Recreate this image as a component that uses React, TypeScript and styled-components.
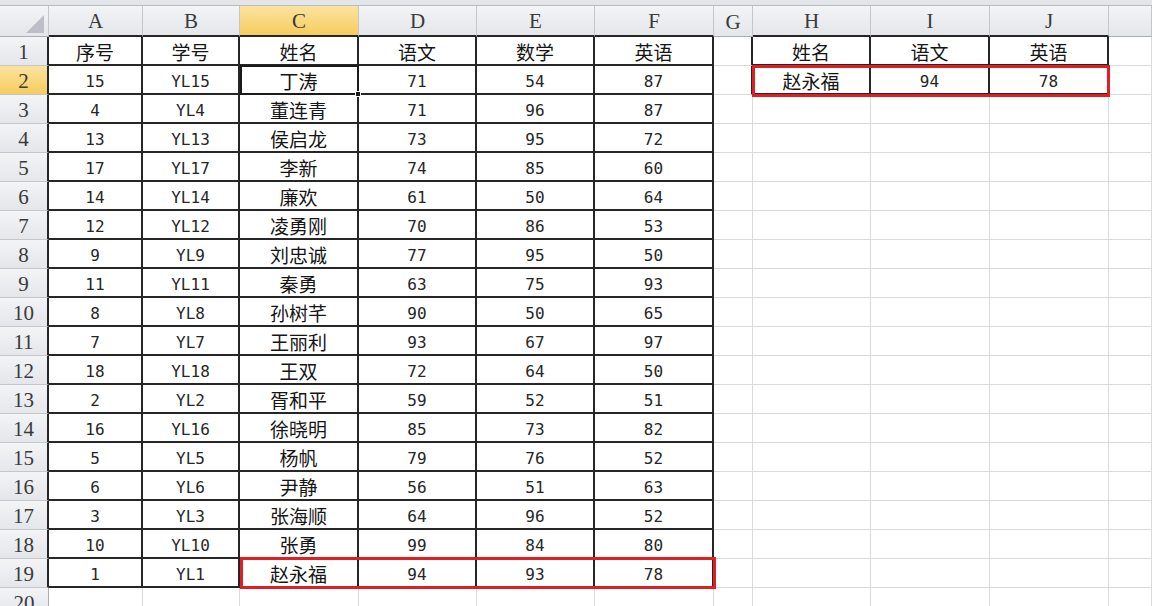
import React from "react";
import styled, { createGlobalStyle, css } from "styled-components";

const GlobalStyle = createGlobalStyle`
  html, body { margin: 0; padding: 0; background: #ffffff; }
  body { overflow: hidden; }
  * { box-sizing: border-box; }
`;

type Col = { key: string; w: string };
const COLS: Col[] = [
  { key: "A", w: "94px" },
  { key: "B", w: "97px" },
  { key: "C", w: "119px" },
  { key: "D", w: "118px" },
  { key: "E", w: "118px" },
  { key: "F", w: "119px" },
  { key: "G", w: "39px" },
  { key: "H", w: "118px" },
  { key: "I", w: "119px" },
  { key: "J", w: "119px" },
  { key: "K", w: "1fr" },
];

const MAIN: string[][] = [
  ["序号", "学号", "姓名", "语文", "数学", "英语"],
  ["15", "YL15", "丁涛", "71", "54", "87"],
  ["4", "YL4", "董连青", "71", "96", "87"],
  ["13", "YL13", "侯启龙", "73", "95", "72"],
  ["17", "YL17", "李新", "74", "85", "60"],
  ["14", "YL14", "廉欢", "61", "50", "64"],
  ["12", "YL12", "凌勇刚", "70", "86", "53"],
  ["9", "YL9", "刘忠诚", "77", "95", "50"],
  ["11", "YL11", "秦勇", "63", "75", "93"],
  ["8", "YL8", "孙树芊", "90", "50", "65"],
  ["7", "YL7", "王丽利", "93", "67", "97"],
  ["18", "YL18", "王双", "72", "64", "50"],
  ["2", "YL2", "胥和平", "59", "52", "51"],
  ["16", "YL16", "徐晓明", "85", "73", "82"],
  ["5", "YL5", "杨帆", "79", "76", "52"],
  ["6", "YL6", "尹静", "56", "51", "63"],
  ["3", "YL3", "张海顺", "64", "96", "52"],
  ["10", "YL10", "张勇", "99", "84", "80"],
  ["1", "YL1", "赵永福", "94", "93", "78"],
];

const LOOKUP: string[][] = [
  ["姓名", "语文", "英语"],
  ["赵永福", "94", "78"],
];

const ROW_COUNT = 20;

const inTable = (r: number, c: number) =>
  (r >= 1 && r <= 19 && c >= 0 && c <= 5) || (r >= 1 && r <= 2 && c >= 7 && c <= 9);

const valueAt = (r: number, c: number): string => {
  if (r >= 1 && r <= 19 && c >= 0 && c <= 5) return MAIN[r - 1][c];
  if (r >= 1 && r <= 2 && c >= 7 && c <= 9) return LOOKUP[r - 1][c - 7];
  return "";
};

const isCjk = (s: string) => /[\u4e00-\u9fff]/.test(s);

const DARK = "#262626";
const GRID = "#d9dadc";
const HEAD_LINE = "#c3c6cb";

const Page = styled.div`
  width: 1152px;
  height: 606px;
  overflow: hidden;
  display: flex;
  flex-direction: column;
  background: #fff;
`;

const TopStrip = styled.div`
  height: 6px;
  flex: none;
  background: #e3e5e9;
  border-bottom: 1px solid #b9bdc3;
`;

const Sheet = styled.div`
  display: grid;
  grid-template-columns: 49px ${COLS.map((c) => c.w).join(" ")};
  grid-template-rows: 31px repeat(${ROW_COUNT}, 29px);
`;

type Pos = { $r: number; $c: number };
const placed = css<Pos>`
  grid-row: ${(p) => p.$r};
  grid-column: ${(p) => p.$c};
`;

const headerBg = css<{ $active?: boolean }>`
  background: ${(p) =>
    p.$active
      ? "linear-gradient(#fbe3a0, #f6cc5e)"
      : "linear-gradient(#f3f4f6, #e4e6ea)"};
`;

const Corner = styled.div`
  grid-row: 1;
  grid-column: 1;
  background: linear-gradient(#f3f4f6, #e4e6ea);
  border-right: 1px solid ${HEAD_LINE};
  border-bottom: 1px solid #a9aeb5;
  display: flex;
  align-items: flex-end;
  justify-content: flex-end;
  padding: 0 4px 3px 0;
`;

const CornerMark = styled.span`
  width: 0;
  height: 0;
  border-left: 18px solid transparent;
  border-bottom: 18px solid #bcc0c6;
`;

const ColHeader = styled.div<Pos & { $active?: boolean; $dark?: boolean }>`
  ${placed};
  ${headerBg};
  border-right: 1px solid ${HEAD_LINE};
  border-bottom: ${(p) => (p.$dark ? `2px solid ${DARK}` : "1px solid #a9aeb5")};
  display: flex;
  align-items: center;
  justify-content: center;
  padding-top: 2px;
  font-family: "Liberation Serif", "Times New Roman", serif;
  font-size: 21px;
  color: #3a3a3a;
`;

const RowHeader = styled.div<Pos & { $active?: boolean; $dark?: boolean }>`
  ${placed};
  ${headerBg};
  border-right: ${(p) => (p.$dark ? `2px solid ${DARK}` : "1px solid #a9aeb5")};
  border-bottom: 1px solid ${HEAD_LINE};
  display: flex;
  align-items: center;
  justify-content: center;
  padding-top: 3px;
  font-family: "Liberation Serif", "Times New Roman", serif;
  font-size: 21px;
  color: #3a3a3a;
  overflow: hidden;
`;

const Cell = styled.div<Pos & { $darkRight?: boolean; $darkBottom?: boolean; $cjk?: boolean }>`
  ${placed};
  border-right: ${(p) => (p.$darkRight ? `2px solid ${DARK}` : `1px solid ${GRID}`)};
  border-bottom: ${(p) => (p.$darkBottom ? `2px solid ${DARK}` : `1px solid ${GRID}`)};
  display: flex;
  align-items: center;
  justify-content: center;
  white-space: nowrap;
  overflow: hidden;
  ${(p) =>
    p.$cjk
      ? css`
          color: #151515;
          font-family: "Noto Sans CJK SC", "Noto Sans", sans-serif;
          font-size: 19px;
          padding-top: 1px;
        `
      : css`
          color: #262626;
          font-family: "DejaVu Sans Mono", "Liberation Mono", monospace;
          font-size: 16px;
          padding-top: 3px;
        `}
`;

const Mark = styled.div<{ $col: string; $row: number; $m: string }>`
  grid-column: ${(p) => p.$col};
  grid-row: ${(p) => p.$row};
  margin: ${(p) => p.$m};
  border: 3px solid #e11f22;
  pointer-events: none;
`;

const Selection = styled.div`
  grid-column: 4 / 5;
  grid-row: 3;
  margin: -1px 0 0 0;
  border: 2px solid #1a1a1a;
  position: relative;
  pointer-events: none;
`;

const FillHandle = styled.span`
  position: absolute;
  right: -4px;
  bottom: -4px;
  width: 6px;
  height: 6px;
  background: #1a1a1a;
  border: 1px solid #fff;
`;

export default function App() {
  const rows = Array.from({ length: ROW_COUNT }, (_, i) => i + 1);
  return (
    <>
      <GlobalStyle />
      <Page>
        <TopStrip />
        <Sheet>
          <Corner>
            <CornerMark />
          </Corner>
          {COLS.map((c, ci) => (
            <ColHeader
              key={c.key}
              $r={1}
              $c={ci + 2}
              $active={c.key === "C"}
              $dark={inTable(1, ci)}
            >
              {c.key === "K" ? "" : c.key}
            </ColHeader>
          ))}
          {rows.map((r) => (
            <React.Fragment key={r}>
              <RowHeader $r={r + 1} $c={1} $active={r === 2} $dark={inTable(r, 0)}>
                {r}
              </RowHeader>
              {COLS.map((c, ci) => {
                const v = valueAt(r, ci);
                const here = inTable(r, ci);
                return (
                  <Cell
                    key={c.key}
                    $r={r + 1}
                    $c={ci + 2}
                    $cjk={isCjk(v)}
                    $darkRight={here || inTable(r, ci + 1)}
                    $darkBottom={here || inTable(r + 1, ci)}
                  >
                    {v}
                  </Cell>
                );
              })}
            </React.Fragment>
          ))}
          <Selection>
            <FillHandle />
          </Selection>
          <Mark $col="4 / 8" $row={20} $m="-2px -2px -1px 0" />
          <Mark $col="9 / 12" $row={3} $m="-1px -1px -2px -1px" />
        </Sheet>
      </Page>
    </>
  );
}
